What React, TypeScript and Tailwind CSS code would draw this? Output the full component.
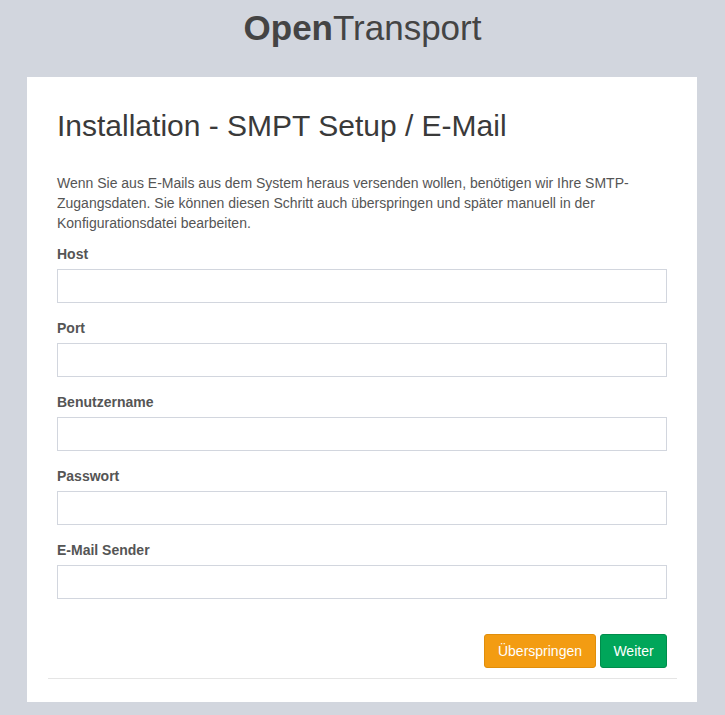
import React from "react";

const fields = ["Host", "Port", "Benutzername", "Passwort", "E-Mail Sender"];

export default function App() {
  return (
    <div
      className="min-h-[715px] w-full bg-[#d2d6de] pt-[3px] pb-[13px]"
      style={{ fontFamily: '"Liberation Sans", Arial, sans-serif' }}
    >
      <div className="mb-[24px] h-[50px] text-center text-[35px] leading-[50px] text-[#444]">
        <b className="font-bold">Open</b>Transport
      </div>
      <div className="mx-[27px] w-[670px] bg-white pt-[32px] pb-[23px]">
        <div className="px-[30px]">
          <h2 className="mb-[31px] text-[30px] leading-[33px] font-normal text-[#3a3a3a]">
            Installation - SMPT Setup / E-Mail
          </h2>
          <p className="mb-[11px] text-[14px] leading-[20px] text-[#555]">
            Wenn Sie aus E-Mails aus dem System heraus versenden wollen, benötigen wir Ihre SMTP-Zugangsdaten. Sie können diesen Schritt auch überspringen und später manuell in der Konfigurationsdatei bearbeiten.
          </p>
          {fields.map((f) => (
            <div key={f} className="mb-[15px]">
              <label className="mb-[5px] block text-[14px] leading-[20px] font-bold text-[#555]">
                {f}
              </label>
              <input
                type="text"
                className="block h-[34px] w-full border border-[#d2d6de] bg-white px-[12px] text-[14px] outline-none"
              />
            </div>
          ))}
          <div className="flex justify-end gap-[4px] pt-[20px] mb-[10px]">
            <button className="h-[34px] w-[112px] rounded-[3px] border border-[#e08e0b] bg-[#f39c12] text-[14px] text-white">
              Überspringen
            </button>
            <button className="h-[34px] w-[67px] rounded-[3px] border border-[#008d4c] bg-[#00a65a] text-[14px] text-white">
              Weiter
            </button>
          </div>
        </div>
        <div className="ml-[21px] mr-[20px] h-px bg-[#e5e5e5]" />
      </div>
    </div>
  );
}
